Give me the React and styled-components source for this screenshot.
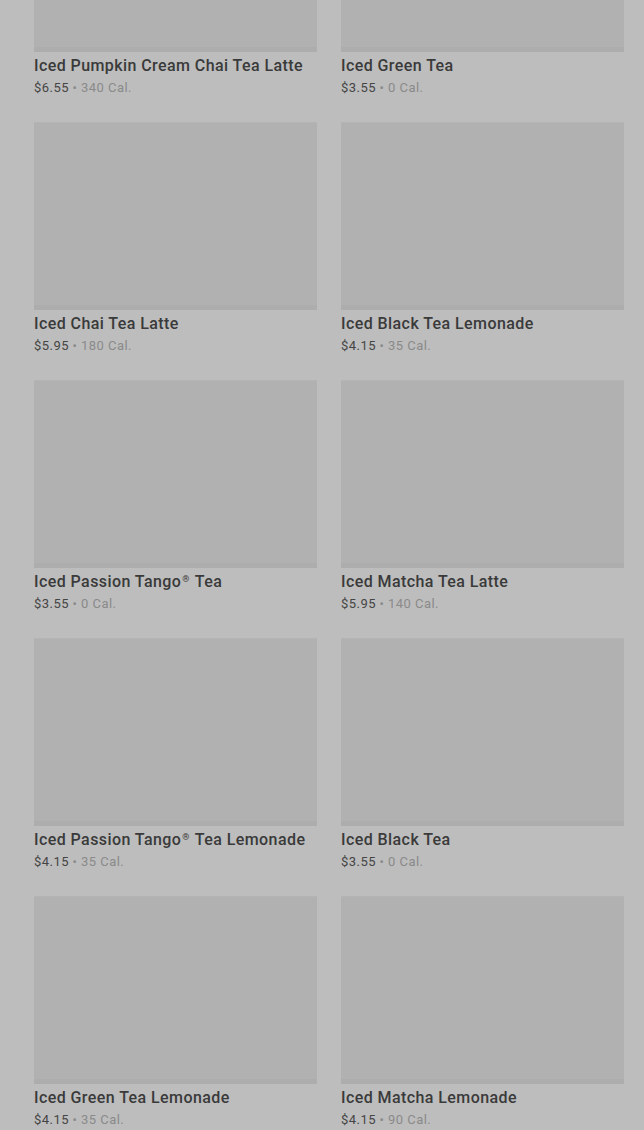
import React from "react";
import styled, { createGlobalStyle } from "styled-components";

const GlobalStyle = createGlobalStyle`
  html, body {
    margin: 0;
    padding: 0;
    background: #bdbdbd;
    overflow: hidden;
  }
  body {
    font-family: Roboto, "Liberation Sans", Arial, sans-serif;
  }
`;

const Page = styled.div`
  width: 644px;
  height: 1130px;
  overflow: hidden;
  background: #bdbdbd;
`;

const Grid = styled.div`
  display: grid;
  grid-template-columns: 283px 283px;
  column-gap: 24px;
  row-gap: 24px;
  padding: 0 20px 0 34px;
  margin-top: -136px;
`;

const Card = styled.div`
  display: flex;
  flex-direction: column;
`;

const Thumb = styled.div`
  height: 188px;
  background: #b1b1b1;
  border-top: 1px solid #b4b4b4;
  box-shadow: inset 0 -5px 0 #adadad;
  box-sizing: border-box;
`;

const Title = styled.div`
  font-size: 16px;
  font-weight: 500;
  line-height: 26px;
  padding-top: 1px;
  height: 26px;
  box-sizing: border-box;
  color: #3a3a3a;
  letter-spacing: 0.42px;
  white-space: nowrap;
`;

const Reg = styled.span`
  font-size: 9px;
  vertical-align: 5px;
  line-height: 0;
  margin: 0 1px;
`;

const Meta = styled.div`
  font-size: 13px;
  line-height: 20px;
  letter-spacing: 0.45px;
  color: #8a8a8a;
`;

const Price = styled.span`
  color: #454545;
`;

const items = [
  { name: "Iced Pumpkin Cream Chai Tea Latte", price: "$6.55", cal: "340 Cal." },
  { name: "Iced Green Tea", price: "$3.55", cal: "0 Cal." },
  { name: "Iced Chai Tea Latte", price: "$5.95", cal: "180 Cal." },
  { name: "Iced Black Tea Lemonade", price: "$4.15", cal: "35 Cal." },
  { name: "Iced Passion Tango® Tea", price: "$3.55", cal: "0 Cal." },
  { name: "Iced Matcha Tea Latte", price: "$5.95", cal: "140 Cal." },
  { name: "Iced Passion Tango® Tea Lemonade", price: "$4.15", cal: "35 Cal." },
  { name: "Iced Black Tea", price: "$3.55", cal: "0 Cal." },
  { name: "Iced Green Tea Lemonade", price: "$4.15", cal: "35 Cal." },
  { name: "Iced Matcha Lemonade", price: "$4.15", cal: "90 Cal." },
];

function renderName(name) {
  const parts = name.split("®");
  if (parts.length === 1) return name;
  return (
    <>
      {parts[0]}
      <Reg>®</Reg>
      {parts[1]}
    </>
  );
}

function App() {
  return (
    <Page>
      <GlobalStyle />
      <Grid>
        {items.map((item) => (
          <Card key={item.name}>
            <Thumb />
            <Title>{renderName(item.name)}</Title>
            <Meta>
              <Price>{item.price}</Price> • {item.cal}
            </Meta>
          </Card>
        ))}
      </Grid>
    </Page>
  );
}

export default App;
